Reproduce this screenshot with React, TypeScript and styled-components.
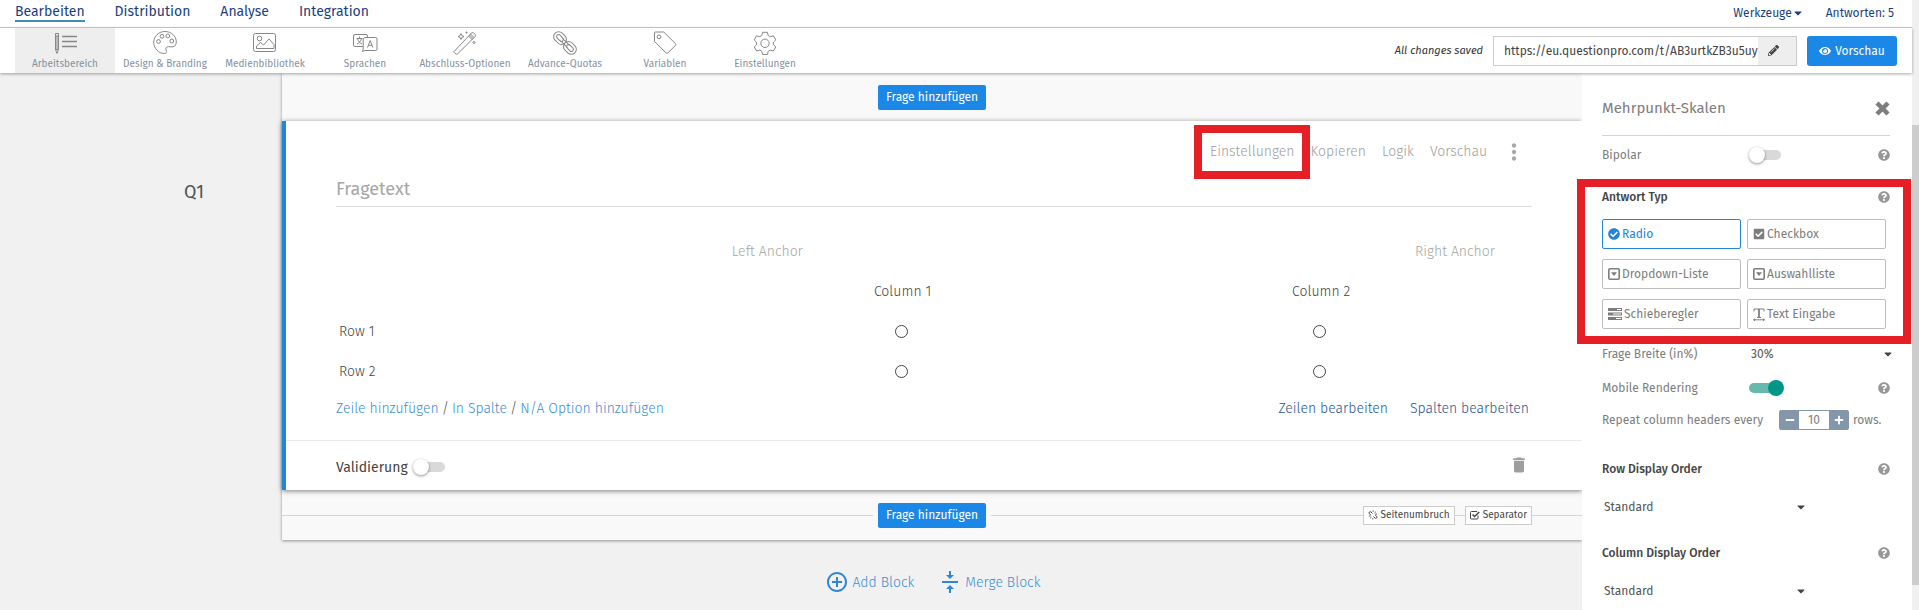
import React from "react";
import styled, { createGlobalStyle, css } from "styled-components";
import {
  FaCaretDown,
  FaCheckCircle,
  FaCheckSquare,
  FaEye,
  FaMinus,
  FaPencilAlt,
  FaPlus,
  FaQuestionCircle,
} from "react-icons/fa";
import { MdAddCircleOutline, MdDelete, MdMoreVert, MdVerticalAlignCenter } from "react-icons/md";

const color = {
  navy: "#1b3f7e",
  blue: "#1b87e6",
  link: "#3d8fd1",
  red: "#e61e26",
  text: "#545454",
  label: "#7d7d7d",
  muted: "#9e9e9e",
  page: "#f1f1f1",
  line: "#cccccc",
};

const GlobalStyle = createGlobalStyle`
  *, *::before, *::after { box-sizing: border-box; }
  body { margin: 0; background: ${color.page}; }
  body, button, input, select {
    font-family: "Fira Sans", Lato, "Liberation Sans", sans-serif;
  }
  button { background: none; border: 0; padding: 0; cursor: pointer; }
  a { text-decoration: none; }
  svg { flex: none; display: block; }
`;

const Shell = styled.div`
  display: flex;
  min-height: 100vh;
`;

const Page = styled.div`
  flex: 1;
  min-width: 0;
  display: flex;
  flex-direction: column;
`;

const ScrollTrack = styled.div`
  flex: none;
  width: 7px;
  padding: 125px 0 25px;
  background: #f0f0f0;
  display: flex;
`;

const ScrollThumb = styled.div`
  flex: 1;
  background: #cdcdcd;
`;

/* Header */

const TopNav = styled.nav`
  height: 28px;
  display: flex;
  align-items: center;
  gap: 30px;
  padding: 0 18px 2px 15px;
  background: #fff;
  border-bottom: 1px solid ${color.line};
`;

const NavLink = styled.a<{ $active?: boolean }>`
  color: ${color.navy};
  font-size: 14px;
  line-height: 16px;
  border-bottom: 2px solid ${(p) => (p.$active ? "#3f8fae" : "transparent")};
`;

const NavEnd = styled.div`
  margin-left: auto;
  display: flex;
  align-items: center;
  gap: 22px;
  font-size: 12px;
  color: ${color.navy};
`;

const NavMenu = styled.button`
  display: flex;
  align-items: center;
  font-size: 12px;
  color: ${color.navy};
`;

const Toolbar = styled.header`
  position: relative;
  z-index: 2;
  height: 45px;
  display: flex;
  align-items: center;
  padding: 0 15px;
  background: #fff;
  box-shadow: 0 1px 3px rgba(0, 0, 0, 0.35);
`;

const Tool = styled.a<{ $active?: boolean }>`
  width: 100px;
  height: 45px;
  display: flex;
  flex-direction: column;
  align-items: center;
  padding-top: 2px;
  font-size: 10px;
  line-height: 14px;
  white-space: nowrap;
  color: #8591a0;
  background: ${(p) => (p.$active ? "#eeeeee" : "transparent")};

  svg {
    width: 26px;
    height: 26px;
    fill: none;
    stroke: #868686;
    stroke-width: 1;
    margin-bottom: 1px;
  }
`;

const ToolbarEnd = styled.div`
  margin-left: auto;
  display: flex;
  align-items: center;
  gap: 10px;
`;

const SaveState = styled.span`
  font-size: 11px;
  font-style: italic;
  color: #333;
`;

const UrlBox = styled.div`
  width: 304px;
  height: 30px;
  display: flex;
  border: 1px solid ${color.line};
`;

const UrlInput = styled.input`
  flex: 1;
  min-width: 0;
  border: 0;
  padding: 0 0 0 10px;
  font-size: 12px;
  color: #444;
`;

const UrlEdit = styled.button`
  width: 38px;
  background: #eeeeee;
  color: #444;
  font-size: 11px;
  display: flex;
  align-items: center;
  padding-left: 10px;
`;

const PreviewButton = styled.button`
  width: 90px;
  height: 30px;
  display: flex;
  align-items: center;
  justify-content: center;
  gap: 4px;
  border-radius: 3px;
  background: ${color.blue};
  color: #fff;
  font-size: 12px;
`;

/* Workspace */

const Workspace = styled.div`
  flex: 1;
  display: flex;
  overflow: hidden;
`;

const Gutter = styled.aside`
  flex: none;
  width: 282px;
  padding: 108px 78px 0 0;
  text-align: right;
  font-size: 18px;
  line-height: 22px;
  color: ${color.text};
`;

const Main = styled.main`
  flex: 1;
  min-width: 0;
`;

const Block = styled.section`
  box-shadow: 0 1px 3px rgba(0, 0, 0, 0.4);
`;

const Strip = styled.div<{ $ruled?: boolean }>`
  height: ${(p) => (p.$ruled ? 50 : 48)}px;
  display: grid;
  grid-template-columns: 1fr auto 1fr;
  align-items: center;
  padding: 0 50px 0 50px;
  background: ${(p) =>
    p.$ruled ? "linear-gradient(#d6d6d6, #d6d6d6) 0 25px / 100% 1px no-repeat #f9f9f9" : "#f9f9f9"};
`;

const AddQuestion = styled.button`
  grid-column: 2;
  height: 25px;
  padding: 0 8px;
  border-radius: 2px;
  background: ${color.blue};
  color: #fff;
  font-size: 12px;
  box-shadow: 0 0 0 5px #f9f9f9;
`;

const StripActions = styled.div`
  display: flex;
  justify-content: flex-end;
  gap: 10px;
`;

const StripButton = styled.button`
  height: 19px;
  display: flex;
  align-items: center;
  gap: 3px;
  padding: 0 4px;
  border: 1px solid ${color.line};
  background: #fff;
  color: #444;
  font-size: 10px;
`;

const Card = styled.article`
  position: relative;
  z-index: 1;
  background: #fff;
  border-left: 4px solid #2484d8;
  box-shadow: 0 1px 5px rgba(0, 0, 0, 0.5);
`;

const CardBody = styled.div`
  padding: 16px 50px 14px 50px;
`;

const CardActions = styled.div`
  height: 30px;
  display: flex;
  align-items: center;
  justify-content: flex-end;
  gap: 16px;
  color: ${color.muted};
`;

const highlight = css`
  position: relative;

  &::after {
    content: "";
    position: absolute;
    border: 8px solid ${color.red};
    pointer-events: none;
  }
`;

const CardAction = styled.button<{ $highlighted?: boolean }>`
  color: ${color.muted};
  font-size: 14px;
  line-height: 18px;
  font-weight: 300;
  ${(p) => p.$highlighted && highlight}

  &::after {
    inset: -18px -15px -18px -16px;
  }
`;

const MoreButton = styled.button`
  width: 22px;
  margin-right: 7px;
  color: #a8a8a8;
  display: flex;
  justify-content: center;
`;

const QuestionInput = styled.input`
  display: block;
  width: 100%;
  height: 36px;
  margin-top: 4px;
  padding: 0;
  border: 0;
  border-bottom: 1px solid #dedede;
  font-size: 18px;
  color: ${color.text};

  &::placeholder {
    color: #a6a6a6;
  }
`;

const Matrix = styled.table`
  width: 100%;
  margin-top: 24px;
  border-collapse: collapse;
  table-layout: fixed;
  font-size: 14px;
  font-weight: 300;
  color: #444;

  tr {
    height: 40px;
  }

  th,
  td {
    padding: 0;
    font-weight: 300;
    text-align: center;
  }

  th[scope="col"] {
    padding-right: 3px;
  }

  tbody td {
    padding-right: 6px;
  }

  th[scope="row"] {
    text-align: left;
    padding-left: 3px;
  }
`;

const LabelCol = styled.col`
  width: 30%;
`;

const Anchors = styled.div`
  display: flex;
  justify-content: space-between;
  padding: 0 37px;
`;

const AnchorInput = styled.input<{ $end?: boolean }>`
  width: 120px;
  border: 0;
  padding: 0;
  font-size: 14px;
  font-weight: 300;
  text-align: ${(p) => (p.$end ? "right" : "left")};

  &::placeholder {
    color: #a6a6a6;
  }
`;

const RadioDot = styled.input`
  appearance: none;
  display: block;
  width: 13px;
  height: 13px;
  margin: 0 auto;
  border: 1px solid #444;
  border-radius: 50%;
`;

const MatrixLinks = styled.div`
  height: 35px;
  display: flex;
  align-items: center;
  gap: 22px;
  font-size: 14px;
  font-weight: 300;
  color: ${color.text};
  padding-right: 3px;
`;

const AddLinks = styled.div`
  margin-right: auto;
  display: flex;
  gap: 3px;
`;

const TextLink = styled.a<{ $strong?: boolean }>`
  color: ${(p) => (p.$strong ? "#1f5590" : color.link)};
`;

const CardFooter = styled.footer`
  height: 50px;
  display: flex;
  align-items: center;
  padding: 3px 53px 0 50px;
  border-top: 1px solid #ebebeb;
`;

const Validation = styled.label`
  display: flex;
  align-items: center;
  gap: 5px;
  font-size: 14px;
  color: #444;
`;

const Toggle = styled.input`
  appearance: none;
  position: relative;
  width: 32px;
  height: 16px;
  margin: 0;

  &::before {
    content: "";
    position: absolute;
    inset: 3px 0 3px 4px;
    border-radius: 5px;
    background: #d9d9d9;
  }

  &::after {
    content: "";
    position: absolute;
    left: 0;
    top: 0;
    width: 16px;
    height: 16px;
    border-radius: 50%;
    background: #fff;
    box-shadow: 0 1px 3px rgba(0, 0, 0, 0.45);
  }

  &:checked::before {
    inset: 3px 4px 3px 0;
    background: #68b9ad;
  }

  &:checked::after {
    left: auto;
    right: -3px;
    background: #009688;
    box-shadow: none;
  }
`;

const DeleteButton = styled.button`
  margin: 0 0 4px auto;
  color: ${color.muted};
  font-size: 20px;
`;

const BlockActions = styled.div`
  display: flex;
  justify-content: center;
  gap: 24px;
  padding: 30px 0 0 2px;
`;

const BlockAction = styled.button`
  display: flex;
  align-items: center;
  gap: 3px;
  color: ${color.link};
  font-size: 14px;
  font-weight: 300;

  svg {
    color: #2e86d6;
  }
`;

/* Settings panel */

const Panel = styled.aside`
  position: relative;
  z-index: 1;
  flex: none;
  width: 330px;
  padding: 0 22px 6px 20px;
  background: #fff;
  font-size: 12px;
  color: ${color.label};
`;

const PanelHeader = styled.header`
  height: 63px;
  padding-top: 8px;
  display: flex;
  align-items: center;
  justify-content: space-between;
  border-bottom: 1px solid #d4d4d4;
`;

const PanelTitle = styled.h2`
  margin: 0;
  font-size: 15px;
  font-weight: 400;
`;

const CloseButton = styled.button`
  color: #7d7d7d;
`;

const Setting = styled.div<{ $height: number }>`
  height: ${(p) => p.$height}px;
  display: grid;
  grid-template-columns: 147px 1fr auto;
  align-items: center;
`;

const AnswerType = styled.section`
  ${highlight}
  padding: 12px 4px 10px 0;

  &::after {
    inset: 6px -21px -5px -25px;
  }
`;

const HeadingRow = styled.div<{ $inset?: boolean }>`
  height: ${(p) => (p.$inset ? 24 : 20)}px;
  margin-right: ${(p) => (p.$inset ? -4 : 0)}px;
  display: flex;
  align-items: center;
  justify-content: space-between;
`;

const Heading = styled.h3`
  margin: 0;
  font-size: 12px;
  font-weight: 500;
  color: #444;
`;

const HelpButton = styled.button`
  color: #979797;
  font-size: 12px;
`;

const TypeGrid = styled.div`
  display: grid;
  grid-template-columns: 1fr 1fr;
  gap: 10px 6px;
  margin-top: 10px;
`;

const TypeButton = styled.button<{ $selected?: boolean }>`
  height: 30px;
  display: flex;
  align-items: center;
  gap: 2px;
  padding: 0 5px;
  border: 1px solid ${(p) => (p.$selected ? "#2484d8" : "#bdbdbd")};
  border-radius: 2px;
  font-size: 12px;
  color: ${(p) => (p.$selected ? "#2484d8" : color.label)};
`;

const SelectWrap = styled.span<{ $span?: boolean; $short?: boolean }>`
  grid-column: ${(p) => (p.$span ? "2 / 4" : "auto")};
  width: ${(p) => (p.$short ? "201px" : "auto")};
  display: grid;
  grid-template-columns: 1fr 8px;
  align-items: center;
  color: #444;

  select {
    grid-area: 1 / 1 / 2 / 3;
    appearance: none;
    height: 20px;
    border: 0;
    padding: 0 0 0 2px;
    background: transparent;
    font-size: 12px;
    color: ${color.text};
  }

  svg {
    grid-area: 1 / 2;
    pointer-events: none;
  }
`;

const RepeatRow = styled.div`
  height: 26px;
  display: flex;
  align-items: center;
`;

const Stepper = styled.div`
  width: 70px;
  height: 20px;
  margin: 0 4px 0 auto;
  display: flex;
  border: 1px solid #8496a9;
  border-radius: 2px;
`;

const StepButton = styled.button`
  width: 19px;
  display: flex;
  align-items: center;
  justify-content: center;
  background: #8496a9;
  color: #fff;
  font-size: 10px;
`;

const StepValue = styled.input`
  flex: 1;
  min-width: 0;
  border: 0;
  padding: 0;
  text-align: center;
  font-size: 12px;
  color: ${color.label};
`;

const Unit = styled.span`
  width: 37px;
`;

const OrderSection = styled.section`
  padding-top: 26px;

  ${SelectWrap} {
    margin-top: 18px;
  }
`;

/* Line icons of the toolbar */

const WorkspaceIcon = () => (
  <svg viewBox="0 0 26 26">
    <path d="M3.5 3.5h3v16l-1.5 4-1.5-4zM3.5 6h3M5 6v13M3.5 19.5h3" />
    <path d="M10 6.5h15M10 11.5h15M10 16.500h15" strokeWidth="1.4" />
  </svg>
);

const PaletteIcon = () => (
  <svg viewBox="0 0 26 26">
    <path d="M13 1.5c-6.300 0-11.300 4.800-11.300 10.800 0 6.200 5 11.200 10.600 11.200 2.200 0 2.600-1.500 1.900-3-.9-2-.3-3.800 2.200-3.900 1.700 0 3 .5 4.500.2 2.400-.4 3.400-2.600 3.400-4.800C24.300 6 19.200 1.500 13 1.500z" />
    <circle cx="6.500" cy="11.500" r="1.9" />
    <circle cx="10" cy="6.300" r="1.9" />
    <circle cx="15.800" cy="6" r="1.9" />
    <circle cx="19.800" cy="11" r="1.9" />
  </svg>
);

const ImageIcon = () => (
  <svg viewBox="0 0 26 26">
    <rect x="1.5" y="3.5" width="22" height="18" rx="2" />
    <circle cx="7.500" cy="8.500" r="2.3" />
    <path d="M4.500 18.500v-2.500l4-3.500 3 2.500 5.500-6 5 5.500v4z" />
  </svg>
);

const LanguageIcon = () => (
  <svg viewBox="0 0 26 26">
    <path d="M11 16.500H3a1.500 1.500 0 0 1-1.500-1.500V6A1.500 1.500 0 0 1 3 4.500h11A1.500 1.500 0 0 1 15.500 6v1.500" />
    <path d="M12.500 7.500h11A1.500 1.500 0 0 1 25 9v10a1.500 1.500 0 0 1-1.500 1.500H13l-2.500 1 .7-2.500V9z" />
    <path d="M4.500 8.500h6M7.500 6.500v2M9.500 8.500c-.5 2.500-2.500 4.500-4.500 5.500M5.500 8.500c.5 2.500 2.500 4.500 4.500 5.500" />
    <path d="M15.500 17.500l2.700-7 2.700 7M16.500 15.300h3.500" />
  </svg>
);

const WandIcon = () => (
  <svg viewBox="0 0 26 26">
    <path d="M2 21.500L19.500 3c1.500-1.500 5 1.500 3.500 3.500L5.500 24c-1 .8-4.200-1.300-3.500-2.500zM16.500 6l3.800 3.800M18.500 4l3.500 3.500M17.500 5l4 4" />
    <path d="M9 3.500l.9 2.100 2.100.9-2.100.9L9 9.500l-.9-2.100L6 6.500l2.100-.9zM14.500 1.500v2M13.500 2.500h2" />
    <circle cx="22" cy="12.500" r="1" />
  </svg>
);

const ChainIcon = () => (
  <svg viewBox="0 0 26 26">
    <g transform="rotate(45 13 13)">
      <rect x="-1" y="8" width="14" height="10" rx="5" />
      <rect x="2" y="11" width="8" height="4" rx="2" />
      <rect x="13" y="8" width="14" height="10" rx="5" />
      <rect x="16" y="11" width="8" height="4" rx="2" />
      <path d="M8 11.500h10M8 14.500h10" />
    </g>
  </svg>
);

const TagIcon = () => (
  <svg viewBox="0 0 26 26">
    <path d="M2.500 3a1 1 0 0 1 1-1h8.200l11.800 11.700a1.200 1.200 0 0 1 0 1.600l-7.700 7.700a1.200 1.200 0 0 1-1.600 0L2.500 11.500z" />
    <circle cx="7" cy="6.800" r="1.9" />
  </svg>
);

const GearIcon = () => (
  <svg viewBox="0 0 26 26">
    <path d="M10.600 2.300h4.800l.8 3.200 2 1.200 3.200-.9 2.400 4.100-2.400 2.300v2.400l2.400 2.300-2.400 4.100-3.200-.9-2 1.200-.8 3.200h-4.800l-.8-3.200-2-1.200-3.200.9-2.400-4.100 2.400-2.300v-2.400L2.200 9.900l2.400-4.100 3.200.9 2-1.200z" strokeLinejoin="round" />
    <circle cx="13" cy="13.300" r="4.200" />
  </svg>
);

/* Small solid icons */

const CloseIcon = () => (
  <svg width="15" height="15" viewBox="0 0 15 15" stroke="currentColor" strokeWidth="4.500">
    <path d="M2 2l11 11M13 2L2 13" />
  </svg>
);

const CaretSquareIcon = () => (
  <svg width="12" height="12" viewBox="0 0 12 12" fill="currentColor">
    <rect x="0.800" y="0.800" width="10.400" height="10.400" rx="1.200" fill="none" stroke="currentColor" strokeWidth="1.600" />
    <path d="M3 4.300h6L6 8z" />
  </svg>
);

const SliderIcon = () => (
  <svg width="14" height="12" viewBox="0 0 14 12" fill="currentColor">
    <path d="M0 0h14v3H0zM0 4.500h14v3H0zM0 9h14v3H0z" />
    <path d="M9 1h4v1H9zM5 5.500h8v1H5zM8 10h5v1H8z" fill="#fff" />
  </svg>
);

const TextIcon = () => (
  <svg width="12" height="13" viewBox="0 0 12 13" fill="none" stroke="currentColor">
    <path d="M1 3.500V1h10v2.500M4 9.500h4M0.500 11.800h11" strokeWidth="1" />
    <path d="M6 1v8.500" strokeWidth="1.800" />
    <path d="M2 10.300v3L0 11.800zM10 10.300v3l2-1.500z" fill="currentColor" stroke="none" />
  </svg>
);

const BrokenLinkIcon = () => (
  <svg width="10" height="10" viewBox="0 0 10 10" fill="none" stroke="currentColor" strokeWidth="1">
    <path d="M4.500 3.500L3 2C2 1 .3 2.500 1.300 3.700L3 5.300M5.500 6.500L7 8c1 1 2.700-.5 1.700-1.700L7 4.700" />
    <path d="M5 2l.3-1.500M6.500 3L8 1.700M7.500 4H9M2.500 6H.8M3.500 7L2 8.300M5 8l-.3 1.500" strokeWidth="0.800" />
  </svg>
);

const CheckBoxIcon = () => (
  <svg width="10" height="10" viewBox="0 0 10 10" fill="none" stroke="currentColor">
    <path d="M8 5.500V8a1 1 0 0 1-1 1H1.500a1 1 0 0 1-1-1V2.500a1 1 0 0 1 1-1H7" />
    <path d="M2.500 4.500l2 2L9.300 2" strokeWidth="1.500" />
  </svg>
);

const tools = [
  { label: "Arbeitsbereich", Icon: WorkspaceIcon },
  { label: "Design & Branding", Icon: PaletteIcon },
  { label: "Medienbibliothek", Icon: ImageIcon },
  { label: "Sprachen", Icon: LanguageIcon },
  { label: "Abschluss-Optionen", Icon: WandIcon },
  { label: "Advance-Quotas", Icon: ChainIcon },
  { label: "Variablen", Icon: TagIcon },
  { label: "Einstellungen", Icon: GearIcon },
];

const answerTypes = [
  { label: "Radio", Icon: FaCheckCircle },
  { label: "Checkbox", Icon: FaCheckSquare },
  { label: "Dropdown-Liste", Icon: CaretSquareIcon },
  { label: "Auswahlliste", Icon: CaretSquareIcon },
  { label: "Schieberegler", Icon: SliderIcon },
  { label: "Text Eingabe", Icon: TextIcon },
];

const Help = ({ topic }: { topic: string }) => (
  <HelpButton type="button" aria-label={`Hilfe: ${topic}`}>
    <FaQuestionCircle />
  </HelpButton>
);

const DisplayOrder = ({ title }: { title: string }) => (
  <OrderSection>
    <HeadingRow>
      <Heading>{title}</Heading>
      <Help topic={title} />
    </HeadingRow>
    <SelectWrap $short>
      <select aria-label={title} defaultValue="Standard">
        <option>Standard</option>
      </select>
      <FaCaretDown size={12} />
    </SelectWrap>
  </OrderSection>
);

export default function App() {
  return (
    <Shell>
      <GlobalStyle />
      <Page>
        <TopNav>
          <NavLink href="#bearbeiten" $active>Bearbeiten</NavLink>
          <NavLink href="#distribution">Distribution</NavLink>
          <NavLink href="#analyse">Analyse</NavLink>
          <NavLink href="#integration">Integration</NavLink>
          <NavEnd>
            <NavMenu type="button">
              Werkzeuge <FaCaretDown />
            </NavMenu>
            <span>Antworten: 5</span>
          </NavEnd>
        </TopNav>

        <Toolbar>
          {tools.map(({ label, Icon }, i) => (
            <Tool key={label} href={`#tool-${i}`} $active={i === 0}>
              <Icon />
              {label}
            </Tool>
          ))}
          <ToolbarEnd>
            <SaveState>All changes saved</SaveState>
            <UrlBox>
              <UrlInput aria-label="Umfrage-URL" readOnly value="https://eu.questionpro.com/t/AB3urtkZB3u5uy" />
              <UrlEdit type="button" aria-label="URL bearbeiten">
                <FaPencilAlt />
              </UrlEdit>
            </UrlBox>
            <PreviewButton type="button">
              <FaEye /> Vorschau
            </PreviewButton>
          </ToolbarEnd>
        </Toolbar>

        <Workspace>
          <Gutter>Q1</Gutter>
          <Main>
            <Block>
              <Strip>
                <AddQuestion type="button">Frage hinzufügen</AddQuestion>
              </Strip>
              <Card>
                <CardBody>
                  <CardActions>
                    <CardAction type="button" $highlighted>Einstellungen</CardAction>
                    <CardAction type="button">Kopieren</CardAction>
                    <CardAction type="button">Logik</CardAction>
                    <CardAction type="button">Vorschau</CardAction>
                    <MoreButton type="button" aria-label="Mehr">
                      <MdMoreVert size={26} />
                    </MoreButton>
                  </CardActions>
                  <QuestionInput aria-label="Fragetext" placeholder="Fragetext" />
                  <Matrix>
                    <colgroup>
                      <LabelCol />
                      <col />
                      <col />
                    </colgroup>
                    <thead>
                      <tr>
                        <td />
                        <td colSpan={2}>
                          <Anchors>
                            <AnchorInput aria-label="Left Anchor" placeholder="Left Anchor" />
                            <AnchorInput aria-label="Right Anchor" placeholder="Right Anchor" $end />
                          </Anchors>
                        </td>
                      </tr>
                      <tr>
                        <td />
                        <th scope="col">Column 1</th>
                        <th scope="col">Column 2</th>
                      </tr>
                    </thead>
                    <tbody>
                      {["Row 1", "Row 2"].map((row) => (
                        <tr key={row}>
                          <th scope="row">{row}</th>
                          {["Column 1", "Column 2"].map((col) => (
                            <td key={col}>
                              <RadioDot type="radio" name={row} aria-label={`${row}, ${col}`} />
                            </td>
                          ))}
                        </tr>
                      ))}
                    </tbody>
                  </Matrix>
                  <MatrixLinks>
                    <AddLinks>
                      <TextLink href="#zeile">Zeile hinzufügen</TextLink>
                      <span>/</span>
                      <TextLink href="#spalte">In Spalte</TextLink>
                      <span>/</span>
                      <TextLink href="#na">N/A Option hinzufügen</TextLink>
                    </AddLinks>
                    <TextLink href="#zeilen" $strong>Zeilen bearbeiten</TextLink>
                    <TextLink href="#spalten" $strong>Spalten bearbeiten</TextLink>
                  </MatrixLinks>
                </CardBody>
                <CardFooter>
                  <Validation>
                    Validierung
                    <Toggle type="checkbox" />
                  </Validation>
                  <DeleteButton type="button" aria-label="Frage löschen">
                    <MdDelete />
                  </DeleteButton>
                </CardFooter>
              </Card>
              <Strip $ruled>
                <AddQuestion type="button">Frage hinzufügen</AddQuestion>
                <StripActions>
                  <StripButton type="button">
                    <BrokenLinkIcon /> Seitenumbruch
                  </StripButton>
                  <StripButton type="button">
                    <CheckBoxIcon /> Separator
                  </StripButton>
                </StripActions>
              </Strip>
            </Block>
            <BlockActions>
              <BlockAction type="button">
                <MdAddCircleOutline size={24} /> Add Block
              </BlockAction>
              <BlockAction type="button">
                <MdVerticalAlignCenter size={24} /> Merge Block
              </BlockAction>
            </BlockActions>
          </Main>

          <Panel>
            <PanelHeader>
              <PanelTitle>Mehrpunkt-Skalen</PanelTitle>
              <CloseButton type="button" aria-label="Schließen">
                <CloseIcon />
              </CloseButton>
            </PanelHeader>
            <Setting $height={37}>
              <label htmlFor="bipolar">Bipolar</label>
              <Toggle id="bipolar" type="checkbox" />
              <Help topic="Bipolar" />
            </Setting>
            <AnswerType>
              <HeadingRow $inset>
                <Heading>Antwort Typ</Heading>
                <Help topic="Antwort Typ" />
              </HeadingRow>
              <TypeGrid>
                {answerTypes.map(({ label, Icon }, i) => (
                  <TypeButton key={label} type="button" $selected={i === 0}>
                    <Icon />
                    {label}
                  </TypeButton>
                ))}
              </TypeGrid>
            </AnswerType>
            <Setting $height={30}>
              <label htmlFor="width">Frage Breite (in%)</label>
              <SelectWrap $span>
                <select id="width" defaultValue="30%">
                  <option>30%</option>
                </select>
                <FaCaretDown size={12} />
              </SelectWrap>
            </Setting>
            <Setting $height={38}>
              <label htmlFor="mobile">Mobile Rendering</label>
              <Toggle id="mobile" type="checkbox" defaultChecked />
              <Help topic="Mobile Rendering" />
            </Setting>
            <RepeatRow>
              <label htmlFor="repeat">Repeat column headers every</label>
              <Stepper>
                <StepButton type="button" aria-label="Weniger">
                  <FaMinus />
                </StepButton>
                <StepValue id="repeat" defaultValue="10" />
                <StepButton type="button" aria-label="Mehr Zeilen">
                  <FaPlus />
                </StepButton>
              </Stepper>
              <Unit>rows.</Unit>
            </RepeatRow>
            <DisplayOrder title="Row Display Order" />
            <DisplayOrder title="Column Display Order" />
          </Panel>
        </Workspace>
      </Page>
      <ScrollTrack>
        <ScrollThumb />
      </ScrollTrack>
    </Shell>
  );
}
